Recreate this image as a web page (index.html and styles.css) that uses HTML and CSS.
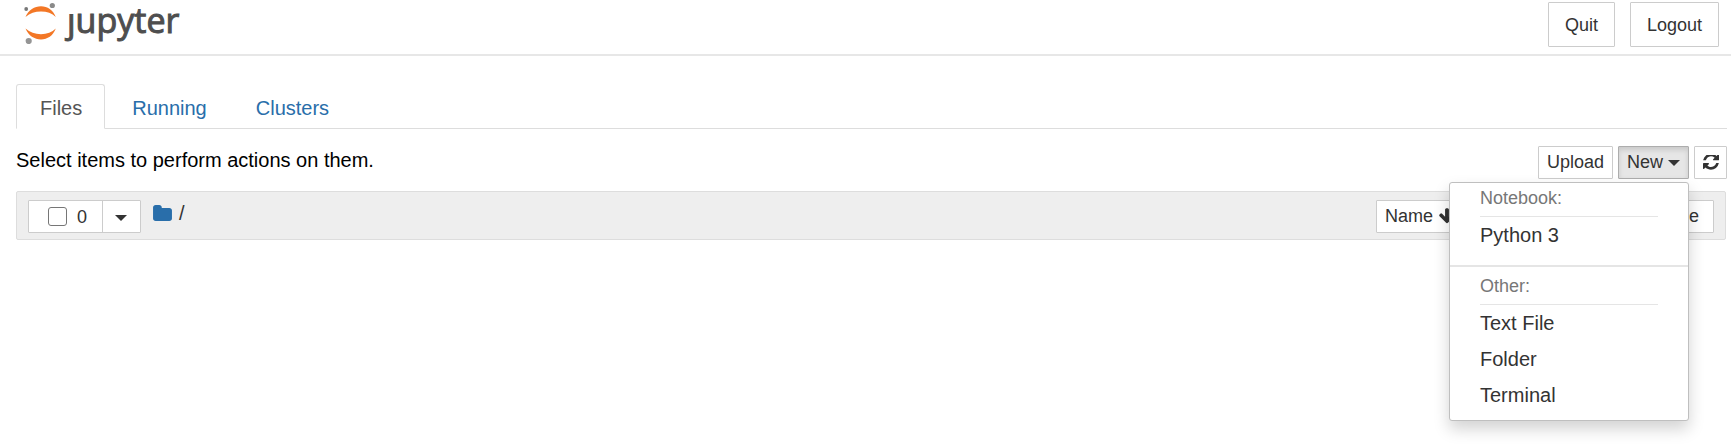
FILE: index.html
```html
<!DOCTYPE html>
<html lang="en">
<head>
<meta charset="utf-8">
<meta name="viewport" content="width=device-width, initial-scale=1">
<title>Home</title>
<link rel="stylesheet" href="styles.css">
</head>
<body>
<header class="header">
  <a class="logo" href="#">
    <svg class="logo-mark" viewBox="0 0 34 44" aria-hidden="true">
      <path fill="#f37726" d="M1.500 17C4.500 10 10.500 6.300 17 6.300S29 10 31.800 17C28 13.300 23 11.600 17 11.600S6 13.300 1.500 17Z"/>
      <path fill="#f37726" d="M1.500 28.500C4.500 35.800 10.500 39.400 17 39.400S29 35.800 31.800 28.500C28 32.200 23 34.200 17 34.200S6 32.200 1.500 28.500Z"/>
      <circle cx="28.300" cy="5.500" r="2.600" fill="#8a8a8a"/>
      <circle cx="2.200" cy="9" r="1.900" fill="#777"/>
      <circle cx="4.700" cy="41" r="3.100" fill="#959595"/>
    </svg>
    <span class="logo-text"><span class="logo-j">j</span>upyter</span>
  </a>
  <div class="session">
    <button class="btn btn-large" type="button">Quit</button>
    <button class="btn btn-large" type="button">Logout</button>
  </div>
</header>
<main class="main">
  <nav class="tabs">
    <a class="tab tab-active" href="#files">Files</a>
    <a class="tab" href="#running">Running</a>
    <a class="tab" href="#clusters">Clusters</a>
  </nav>
  <div class="toolbar">
    <p class="hint">Select items to perform actions on them.</p>
    <div class="actions">
      <button class="btn" type="button">Upload</button>
      <div class="dropdown">
        <button class="btn btn-open" type="button" aria-expanded="true">New <span class="caret"></span></button>
        <div class="menu">
          <div class="menu-title">Notebook:</div>
          <a class="menu-item" href="#">Python 3</a>
          <div class="menu-divider"></div>
          <div class="menu-title">Other:</div>
          <a class="menu-item" href="#">Text File</a>
          <a class="menu-item" href="#">Folder</a>
          <a class="menu-item" href="#">Terminal</a>
        </div>
      </div>
      <button class="btn btn-icon" type="button" aria-label="Refresh">
        <svg class="icon-refresh" viewBox="0 128 1536 1536" aria-hidden="true"><path d="M1511 928q0 5-1 7-64 268-268 434.500t-478 166.500q-146 0-282.500-55t-243.500-157l-129 129q-19 19-45 19t-45-19-19-45v-448q0-26 19-45t45-19h448q26 0 45 19t19 45-19 45l-137 137q71 66 161 102t187 36q134 0 250-65t186-179q11-17 53-117 8-23 30-23h192q13 0 22.500 9.500t9.500 22.500zm25-800v448q0 26-19 45t-45 19h-448q-26 0-45-19t-19-45 19-45l138-138q-148-137-349-137-134 0-250 65t-186 179q-11 17-53 117-8 23-30 23h-199q-13 0-22.500-9.500t-9.500-22.500v-7q65-268 270-434.500t480-166.500q146 0 284 55.500t245 156.500l130-129q19-19 45-19t45 19 19 45z"/></svg>
      </button>
    </div>
  </div>
  <div class="list-header">
    <div class="selector">
      <label class="select-all"><input class="check" type="checkbox">0</label>
      <button class="select-menu" type="button" aria-label="Select by type"><span class="caret"></span></button>
    </div>
    <div class="path">
      <a class="crumb" href="#" aria-label="Home folder">
        <svg class="icon-folder" viewBox="0 128 1664 1408" aria-hidden="true"><path d="M1664 608v704q0 92-66 158t-158 66h-1216q-92 0-158-66t-66-158v-960q0-92 66-158t158-66h320q92 0 158 66t66 158v32h672q92 0 158 66t66 158z"/></svg>
      </a>
      <span>/</span>
    </div>
    <div class="sort">
      <button class="btn" type="button">Name <svg class="icon-arrow" viewBox="0 0 1792 1792" aria-hidden="true"><path d="M1675 832q0 53-37 90l-651 652q-39 37-91 37-53 0-90-37l-651-652q-38-36-38-90 0-53 38-91l74-75q39-37 91-37 53 0 90 37l294 294v-704q0-52 38-90t90-38h128q52 0 90 38t38 90v704l294-294q37-37 90-37 52 0 91 37l75 75q37 39 37 91z"/></svg></button>
      <button class="btn" type="button">Last Modified</button>
      <button class="btn btn-size" type="button">File size</button>
    </div>
  </div>
</main>
</body>
</html>
```
FILE: styles.css
```css
* { box-sizing: border-box; }

body {
  min-height: 100vh;
  margin: 0;
  background: #fff;
  color: #000;
  font: 20px/28px "Liberation Sans", Arial, sans-serif;
}

a { color: #296eaa; text-decoration: none; }

.header {
  display: flex;
  justify-content: space-between;
  align-items: flex-start;
  padding: 0 12px 7px 24px;
  border-bottom: 2px solid #e7e7e7;
}

.logo { display: flex; gap: 9px; color: #4e4e4e; }
.logo-mark { width: 34px; height: 44px; }
.logo-text { font: 34px/40px "Open Sans", sans-serif; -webkit-text-stroke: 1px #4e4e4e; }
.logo-j { display: inline-block; clip-path: inset(14px -8px -8px -8px); }

.session { display: flex; gap: 15px; padding-top: 2px; }

.btn {
  display: flex;
  align-items: center;
  gap: 5px;
  height: 33px;
  padding: 0 8px 2px;
  border: 1px solid #ccc;
  border-radius: 1px;
  background: #fff;
  color: #333;
  font: 18px/24px "Liberation Sans", Arial, sans-serif;
  white-space: nowrap;
}
.btn svg { fill: #333; }
.btn-large { height: 45px; padding: 0 16px; }
.btn-icon { justify-content: center; width: 33px; padding: 0; }
.btn-open {
  border-color: #adadad;
  background: #e6e6e6;
  box-shadow: inset 0 3px 5px rgba(0, 0, 0, 0.125);
}

.caret {
  margin-top: 2px;
  border-top: 6px solid #333;
  border-left: 6px solid transparent;
  border-right: 6px solid transparent;
}

.main { padding: 28px 4px 0 16px; }

.tabs { display: flex; gap: 3px; border-bottom: 1px solid #ddd; }
.tab {
  margin-bottom: -1px;
  padding: 9px 21px 6px 23px;
  border: 1px solid transparent;
  border-radius: 3px 3px 0 0;
}
.tab-active {
  padding-right: 22px;
  border-color: #ddd;
  border-bottom-color: #fff;
  background: #fff;
  color: #555;
}

.toolbar {
  display: flex;
  justify-content: space-between;
  align-items: flex-start;
  padding: 17px 0 12px;
}
.hint { margin: 0; }
.actions { display: flex; gap: 5px; }
.dropdown { position: relative; }

.menu {
  position: absolute;
  z-index: 1;
  top: 100%;
  right: 0;
  width: 240px;
  margin-top: 3px;
  padding: 0 0 7px;
  border: 1px solid #bfbfbf;
  border-radius: 3px;
  background: #fff;
  box-shadow: 0 8px 16px rgba(0, 0, 0, 0.175);
}
.menu-title {
  margin: 0 30px;
  padding: 3px 0 6px;
  border-bottom: 1px solid #e5e5e5;
  color: #777;
  font-size: 18px;
  line-height: 24px;
}
.menu-item { display: block; padding: 4px 30px; color: #333; }
.menu-divider { height: 2px; margin: 12px 0 4px; background: #e5e5e5; }

.list-header {
  display: flex;
  align-items: center;
  margin-right: 1px;
  padding: 8px 11px 6px;
  border: 1px solid #ddd;
  border-radius: 2px;
  background: #eee;
}

.selector { display: flex; height: 33px; border: 1px solid #ccc; border-radius: 1px; background: #fff; }
.select-all {
  display: flex;
  align-items: center;
  gap: 10px;
  padding: 0 15px 0 19px;
  color: #333;
  font-size: 18px;
}
.check {
  appearance: none;
  width: 19px;
  height: 19px;
  margin: 0;
  border: 1px solid #767676;
  border-radius: 3px;
  background: #fff;
}
.select-menu {
  display: flex;
  align-items: center;
  padding: 0 13px 0 12px;
  border: 0;
  border-left: 1px solid #ccc;
  background: none;
}

.path {
  display: flex;
  align-items: center;
  align-self: flex-start;
  gap: 7px;
  padding-left: 12px;
  color: #333;
  line-height: 26px;
}
.crumb { display: flex; }
.icon-folder { width: 19px; height: 16px; fill: #296eaa; }
.icon-refresh { width: 16px; height: 16px; }
.icon-arrow { width: 18px; height: 18px; }

.sort { display: flex; gap: 17px; margin-left: auto; }
.btn-size { padding-right: 14px; }
```
